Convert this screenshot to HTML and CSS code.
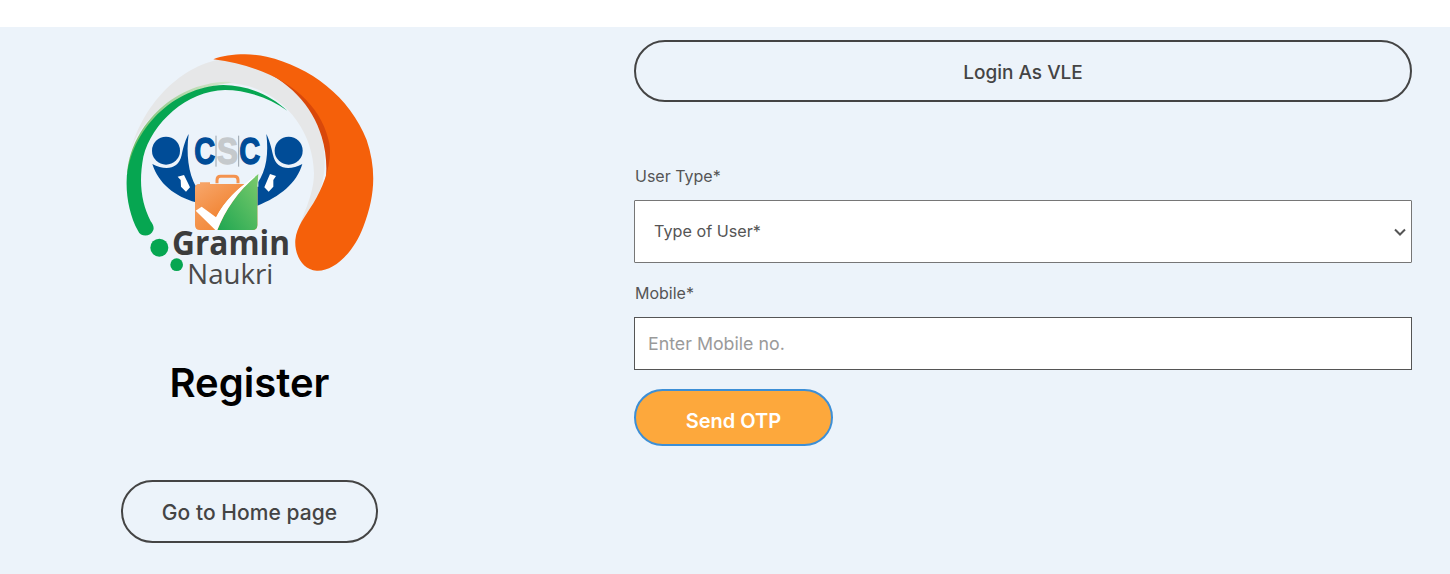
FILE: index.html
```html
<!DOCTYPE html>
<html lang="en">
<head>
<meta charset="utf-8">
<title>Register</title>
<link rel="stylesheet" href="styles.css">
</head>
<body>
<header class="topbar"></header>
<main class="page">
  <section class="side">
    <svg class="logo" viewBox="0 0 840 780" role="img" aria-label="CSC Gramin Naukri">
      <defs>
        <linearGradient id="gOrange" x1="0" y1="0" x2="1" y2="1"><stop offset="0" stop-color="#f7a76c"/><stop offset="1" stop-color="#f07a22"/></linearGradient>
        <linearGradient id="gGreen" x1="0" y1="1" x2="1" y2="0"><stop offset="0" stop-color="#1fa651"/><stop offset="1" stop-color="#7ccb6c"/></linearGradient>
        <linearGradient id="gPale" x1="0" y1="1" x2="1" y2="0"><stop offset="0" stop-color="#5fb654"/><stop offset="1" stop-color="#d7e6cf"/></linearGradient>
      </defs>
      <path class="grey" d="M60 340C100 180 230 62 360 55C480 60 600 170 635 290C655 370 640 450 610 490C590 520 575 540 565 572C570 540 612 470 612 400C610 250 490 130 350 130C210 130 85 240 60 340Z"/>
      <path class="orange-dark" d="M340 50C520 65 640 180 664 320C670 370 657 420 640 460C655 400 650 340 635 290C600 170 490 80 340 50Z"/>
      <path class="orange" d="M310 58C350 42 420 38 470 50C600 80 720 170 770 300C800 390 795 470 760 560C730 640 670 695 620 692C575 690 553 640 556 600C560 560 585 530 610 490C640 440 668 370 658 310C635 190 520 85 310 58Z"/>
      <path fill="url(#gPale)" d="M52 400C60 270 180 130 350 125C390 126 340 130 300 140C180 165 85 270 70 380Z"/>
      <path class="green" d="M532 212C480 165 410 135 340 135C190 140 60 270 50 420C48 470 60 530 84 572C92 592 122 592 130 570C133 560 128 552 122 544C95 490 85 430 100 350C125 250 230 152 345 150C410 150 480 175 532 212Z"/>
      <circle class="green" cx="148" cy="623" r="27"/>
      <circle class="green" cx="200" cy="674" r="19"/>
      <circle class="blue" cx="168" cy="332" r="42"/>
      <circle class="blue" cx="536" cy="332" r="42"/>
      <path class="blue" d="M127 372C165 392 205 390 215 345C220 320 228 295 236 282C228 340 235 400 258 440L258 487C195 470 145 430 127 372Z"/>
      <path class="blue" d="M577 372C539 392 499 390 489 345C484 320 476 295 469 282C476 340 470 390 442 430L442 497C510 470 560 430 577 372Z"/>
      <path class="white" d="M203 410L222 405L232 425L240 442L228 455L213 440L212 420Z"/>
      <path class="white" d="M498 408L480 402L470 425L463 442L476 455L490 440L490 420Z"/>
      <text class="csc" x="253" y="372" textLength="63" lengthAdjust="spacingAndGlyphs">C</text>
      <text class="csc-grey" x="321" y="372" textLength="63" lengthAdjust="spacingAndGlyphs">S</text>
      <text class="csc" x="388" y="372" textLength="63" lengthAdjust="spacingAndGlyphs">C</text>
      <path class="csc-line" d="M318 287V380M386 287V380"/>
      <path class="handle" d="M321 430V420Q321 409 332 409H372Q384 409 384 420V430"/>
      <path fill="url(#gOrange)" d="M270 427H300V432H430Q442 432 442 445V555Q442 570 427 570H270Q255 570 255 555V445Q255 432 270 432Z"/>
      <path class="tickgap" d="M318 532C345 480 385 445 416 420L445 402V440H400Z"/>
      <path fill="url(#gOrange)" d="M300 432H405C370 455 340 490 318 532L255 490V445Q255 432 270 432Z"/>
      <path fill="url(#gGreen)" d="M445 402L442 440V555Q442 570 427 570H322C345 510 390 445 445 402Z"/>
      <path class="white" d="M257 512L275 500L318 532C345 480 395 435 445 402C390 445 345 510 322 570H316Z"/>
      <text class="gramin" x="186" y="646" textLength="354" lengthAdjust="spacingAndGlyphs">Gramin</text>
      <text class="naukri" x="232" y="733" textLength="258" lengthAdjust="spacingAndGlyphs">Naukri</text>
    </svg>
    <h1 class="title">Register</h1>
    <a class="btn home" href="#">Go to Home page</a>
  </section>
  <section class="content">
    <a class="btn login" href="#">Login As VLE</a>
    <form class="form">
      <label class="label" for="type">User Type*</label>
      <select class="control select" id="type"><option>Type of User*</option></select>
      <label class="label mobile" for="mobile">Mobile*</label>
      <input class="control input" id="mobile" type="text" placeholder="Enter Mobile no.">
      <button class="otp" type="button">Send OTP</button>
    </form>
  </section>
</main>
</body>
</html>
```
FILE: styles.css
```css
* { box-sizing: border-box; }
html, body { margin: 0; padding: 0; }
body {
  background: #fff;
  font-family: Inter, "Liberation Sans", sans-serif;
  color: #444;
  overflow: hidden;
}
.topbar { height: 27px; background: #fff; }
.page {
  height: 547px;
  background: #ecf3fa;
  display: flex;
  padding: 13px 38px 0 0;
  gap: 135px;
}
.side {
  width: 499px;
  flex: none;
  display: flex;
  flex-direction: column;
  align-items: center;
}
.logo { width: 280px; height: 260px; flex: none; }
.title {
  margin: 59px 0 0;
  font-size: 40px;
  line-height: 48px;
  font-weight: 600;
  color: #000;
  letter-spacing: 0;
}
.btn {
  display: flex;
  align-items: center;
  justify-content: center;
  border: 2px solid #444;
  border-radius: 40px;
  color: #444;
  text-decoration: none;
  font-weight: 500;
}
.home { width: 257px; height: 63px; margin-top: 73px; font-size: 21px; letter-spacing: 0.05px; padding-top: 2px; }
.content { flex: 1; min-width: 0; }
.login { height: 62px; font-size: 19px; padding-top: 2px; }
.form { display: flex; flex-direction: column; align-items: flex-start; margin-top: 62px; }
.label { font-size: 16px; line-height: 24px; color: #555; height: 24px; padding-left: 1px; }
.mobile { margin-top: 18px; }
.control {
  width: 100%;
  background-color: #fff;
  border-radius: 0;
  font-family: inherit;
  display: block;
}
.select {
  height: 63px;
  margin-top: 12px;
  border: 1px solid #767676;
  border-radius: 1px;
  padding: 0 19px 2px;
  font-size: 16.2px;
  color: #555;
  appearance: none;
  background-image: url("data:image/svg+xml,%3Csvg xmlns='http://www.w3.org/2000/svg' width='12' height='8' viewBox='0 0 12 8'%3E%3Cpath d='M1 1.5l5 5 5-5' fill='none' stroke='%23555' stroke-width='2'/%3E%3C/svg%3E");
  background-repeat: no-repeat;
  background-position: right 5px center;
}
.input {
  height: 53px;
  margin-top: 12px;
  border: 1px solid #555;
  padding: 0 13px;
  font-size: 17.8px;
  color: #444;
}
.input::placeholder { color: #9a9a9a; opacity: 1; }
.otp {
  width: 199px;
  height: 57px;
  margin-top: 19px;
  padding-top: 8px;
  background: #fda83c;
  border: 2px solid #3d8fd6;
  border-radius: 30px;
  color: #fff;
  font-family: inherit;
  font-size: 20px;
  font-weight: 600;
}
.grey { fill: #e6e7e8; }
.orange { fill: #f5600a; }
.orange-dark { fill: #d9480a; }
.green { fill: #06a651; }
.blue { fill: #004c97; }
.white { fill: #fff; }
.tickgap { fill: #ecf3fa; }
.csc { font: 700 108px "Liberation Sans", sans-serif; fill: #004c97; stroke: #004c97; stroke-width: 4; }
.csc-grey { font: 700 108px "Liberation Sans", sans-serif; fill: #c5c9cc; stroke: #c5c9cc; stroke-width: 4; }
.csc-line { stroke: #9aa3ab; stroke-width: 3; fill: none; }
.handle { stroke: #f4934f; stroke-width: 9; fill: none; }
.gramin { font: 700 100px "Open Sans", sans-serif; fill: #3c3c3c; }
.naukri { font: 400 80px "Open Sans", sans-serif; fill: #4a4a4a; }
```
